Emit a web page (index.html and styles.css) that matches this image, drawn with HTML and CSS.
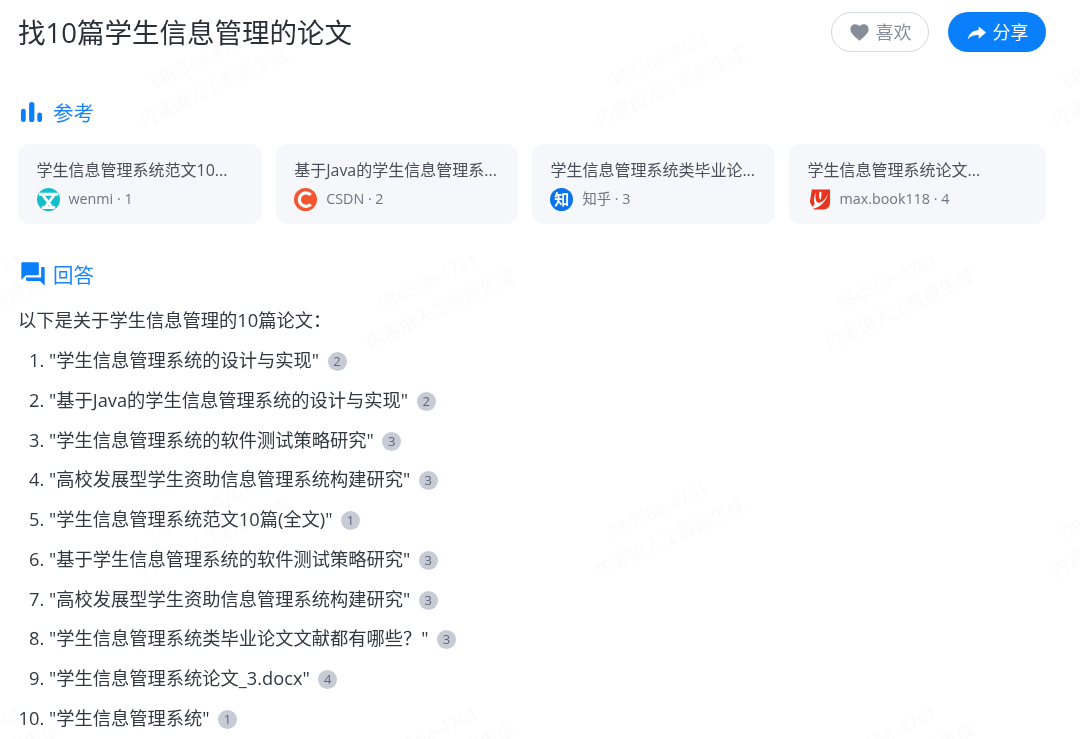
FILE: index.html
```html
<!DOCTYPE html>
<html lang="zh-CN">
<head>
<meta charset="utf-8">
<title>找10篇学生信息管理的论文</title>
<link rel="stylesheet" href="styles.css">
</head>
<body>
<main class="page">
  <header class="top">
    <h1 class="title">找10篇学生信息管理的论文</h1>
    <div class="actions">
      <button class="btn btn-like">
        <svg class="btn-icon" viewBox="0 0 24 24"><path fill="#868e9a" d="M12 21.5 10.4 20C5 15.2 1.6 12.1 1.6 8.2 1.6 5 4.1 2.6 7.3 2.6c1.8 0 3.5.8 4.7 2.2 1.2-1.4 2.900-2.200 4.700-2.200 3.200 0 5.700 2.400 5.700 5.600 0 3.900-3.400 7-8.800 11.800z"/></svg>
        <span class="btn-label">喜欢</span>
      </button>
      <button class="btn btn-share">
        <svg class="btn-icon" viewBox="0 0 24 24"><path fill="#fff" d="M14.500 5 23 12l-8.500 7v-4.200C9 14.800 5 16 2 20c.8-5.500 4.500-10 12.500-10.800z"/></svg>
        <span class="btn-label">分享</span>
      </button>
    </div>
  </header>

  <section class="refs">
    <h2 class="sec-head">
      <svg class="sec-icon" viewBox="0 0 24 24"><rect x="1" y="8" width="5" height="14" rx="2.500" fill="#0a7ffb"/><rect x="9.500" y="1" width="5.500" height="21" rx="2.700" fill="#0a7ffb"/><rect x="18" y="12" width="5" height="10" rx="2.500" fill="#0a7ffb"/></svg>
      参考
    </h2>
    <div class="cards">
      <article class="card">
        <p class="card-title">学生信息管理系统范文10...</p>
        <div class="card-meta">
          <svg class="logo" viewBox="0 0 24 24"><circle cx="12" cy="12" r="12" fill="#13bfc9"/><path d="M2 6.500h20M5.500 6.500 12 15.500l6.500-9M12 15.500 8 20.500M12 15.500l4 5M5 20.500h14" fill="none" stroke="#fff" stroke-width="3"/></svg>
          <span>wenmi · 1</span>
        </div>
      </article>
      <article class="card">
        <p class="card-title">基于Java的学生信息管理系...</p>
        <div class="card-meta">
          <svg class="logo" viewBox="0 0 24 24"><circle cx="12" cy="12" r="12" fill="#f4552e"/><path d="M17.500 7.200A7 7 0 1 0 17.500 17" fill="none" stroke="#fff" stroke-width="3.400"/></svg>
          <span>CSDN · 2</span>
        </div>
      </article>
      <article class="card">
        <p class="card-title">学生信息管理系统类毕业论...</p>
        <div class="card-meta">
          <span class="logo logo-zhi">知</span>
          <span>知乎 · 3</span>
        </div>
      </article>
      <article class="card">
        <p class="card-title">学生信息管理系统论文...</p>
        <div class="card-meta">
          <svg class="logo" viewBox="0 0 24 24"><path d="M4 1.500h19v14c0 3.500-2.500 7-7 7H6l-2-4-2-4z" fill="#e8351f"/><path d="M1 22.500C9 22 18 17 21 6c-3 6-6 9-10 9.500C8 15 7 10 8.500 4 6 9 5.500 13 7 17c-1.500 2-3.500 3.500-6 5.500zM12 4c-1 4-.5 7 1 8.500 1-2.500 1-5.500 1-8.500z" fill="#fff"/></svg>
          <span>max.book118 · 4</span>
        </div>
      </article>
    </div>
  </section>

  <section class="answer">
    <h2 class="sec-head">
      <svg class="sec-icon sec-icon-chat" viewBox="0 0 24 24"><path fill="#0a7ffb" d="M21 6h-2v9H6v2c0 .55.45 1 1 1h11l4 4V7c0-.55-.45-1-1-1zm-4 6V3c0-.55-.45-1-1-1H3c-.55 0-1 .45-1 1v14l4-4h10c.55 0 1-.45 1-1z"/></svg>
      回答
    </h2>
    <p class="intro">以下是关于学生信息管理的10篇论文：</p>
    <ol class="list">
      <li>"学生信息管理系统的设计与实现"<span class="cite">2</span></li>
      <li>"基于Java的学生信息管理系统的设计与实现"<span class="cite">2</span></li>
      <li>"学生信息管理系统的软件测试策略研究"<span class="cite">3</span></li>
      <li>"高校发展型学生资助信息管理系统构建研究"<span class="cite">3</span></li>
      <li>"学生信息管理系统范文10篇(全文)"<span class="cite">1</span></li>
      <li>"基于学生信息管理系统的软件测试策略研究"<span class="cite">3</span></li>
      <li>"高校发展型学生资助信息管理系统构建研究"<span class="cite">3</span></li>
      <li>"学生信息管理系统类毕业论文文献都有哪些？"<span class="cite">3</span></li>
      <li>"学生信息管理系统论文_3.docx"<span class="cite">4</span></li>
      <li>"学生信息管理系统"<span class="cite">1</span></li>
    </ol>
  </section>
</main>

<div class="marks" aria-hidden="true">
  <span class="wm r1 c1">98d56e-4761<br>内容由人工智能生成</span>
  <span class="wm r1 c2">98d56e-4761<br>内容由人工智能生成</span>
  <span class="wm r1 c3">98d56e-4761<br>内容由人工智能生成</span>
  <span class="wm r2 d0">98d56e-4761<br>内容由人工智能生成</span>
  <span class="wm r2 d1">98d56e-4761<br>内容由人工智能生成</span>
  <span class="wm r2 d2">98d56e-4761<br>内容由人工智能生成</span>
  <span class="wm r3 c1">98d56e-4761<br>内容由人工智能生成</span>
  <span class="wm r3 c2">98d56e-4761<br>内容由人工智能生成</span>
  <span class="wm r3 c3">98d56e-4761<br>内容由人工智能生成</span>
  <span class="wm r4 d0">98d56e-4761<br>内容由人工智能生成</span>
  <span class="wm r4 d1">98d56e-4761<br>内容由人工智能生成</span>
  <span class="wm r4 d2">98d56e-4761<br>内容由人工智能生成</span>
</div>
</body>
</html>
```
FILE: styles.css
```css
* { box-sizing: border-box; }
html, body { margin: 0; height: 100%; overflow: hidden; background: #fff; }
body {
  position: relative;
  font-family: "Open Sans", "Noto Sans CJK SC", sans-serif;
  color: #333840;
}
.page { padding: 0 34px 0 18px; filter: blur(0.3px); }

.top { display: flex; justify-content: space-between; align-items: center; height: 64px; }
.title { margin: 2px 0 0; font-size: 27.500px; font-weight: 400; color: #2b3038; line-height: 40px; }
.actions { display: flex; gap: 19px; }
.btn {
  display: flex; align-items: center; justify-content: center; gap: 6px;
  width: 98px; height: 40px; border-radius: 20px; padding: 0;
  font: inherit; font-size: 18px; cursor: pointer;
}
.btn-label { margin-bottom: 2px; }
.btn-like { background: #fff; border: 1px solid #d5d9e0; color: #868e9a; }
.btn-share { background: #0a7ffb; border: 0; color: #fff; }
.btn-icon { width: 21px; height: 21px; }

.refs { padding-top: 32px; }
.sec-head {
  display: flex; align-items: center; gap: 10px;
  margin: 0; height: 32px;
  font-size: 20.500px; font-weight: 400; color: #1c86f7;
}
.sec-icon { width: 23px; height: 23px; margin-left: 2px; }
.sec-icon-chat { width: 28px; height: 28px; margin-left: 1px; margin-right: -4px; }

.cards {
  display: grid;
  grid-template-columns: 244px 242.500px 243.500px 1fr;
  gap: 13.700px;
  margin-top: 16px;
}
.card { height: 80px; padding: 14px 18.500px; background: #f6f7fa; border-radius: 12px; }
.card-title { margin: 0; font-size: 16px; line-height: 24px; color: #4a505a; white-space: nowrap; }
.card-meta { display: flex; align-items: center; gap: 9px; margin-top: 5px; font-size: 14.300px; color: #6d7582; line-height: 24px; }
.logo { display: block; width: 23px; height: 23px; flex: none; }
.logo-zhi {
  display: flex; align-items: center; justify-content: center;
  border-radius: 50%; background: #0a74e8; color: #fff; font-size: 15px; font-weight: 700;
}

.answer { padding-top: 34px; }
.intro { margin: 10px 0 0; font-size: 18.300px; line-height: 40px; color: #333840; }
.list { margin: 0; padding: 0 0 0 31px; font-size: 18.250px; line-height: 39.750px; color: #333840; }
.cite {
  display: inline-flex; align-items: center; justify-content: center;
  width: 19px; height: 19px; margin-left: 8.500px; border-radius: 50%;
  background: #c6cbd5; color: #5f6775; font-size: 13px; line-height: 19px;
  vertical-align: 1px;
}

.marks { position: absolute; inset: 0; overflow: hidden; pointer-events: none; }
.wm {
  position: absolute; width: 200px; margin: -30px 0 0 -100px;
  transform: rotate(-25deg); text-align: center; filter: blur(0.4px);
  font-size: 18px; line-height: 30px; color: rgba(40, 50, 70, 0.025); white-space: nowrap;
}
.r1 { top: 73px; }
.r2 { top: 295px; }
.r3 { top: 523px; }
.r4 { top: 748px; }
.c1 { left: 207px; }
.c2 { left: 664px; }
.c3 { left: 1119px; }
.d0 { left: -22px; }
.d1 { left: 434px; }
.d2 { left: 893px; }
```
